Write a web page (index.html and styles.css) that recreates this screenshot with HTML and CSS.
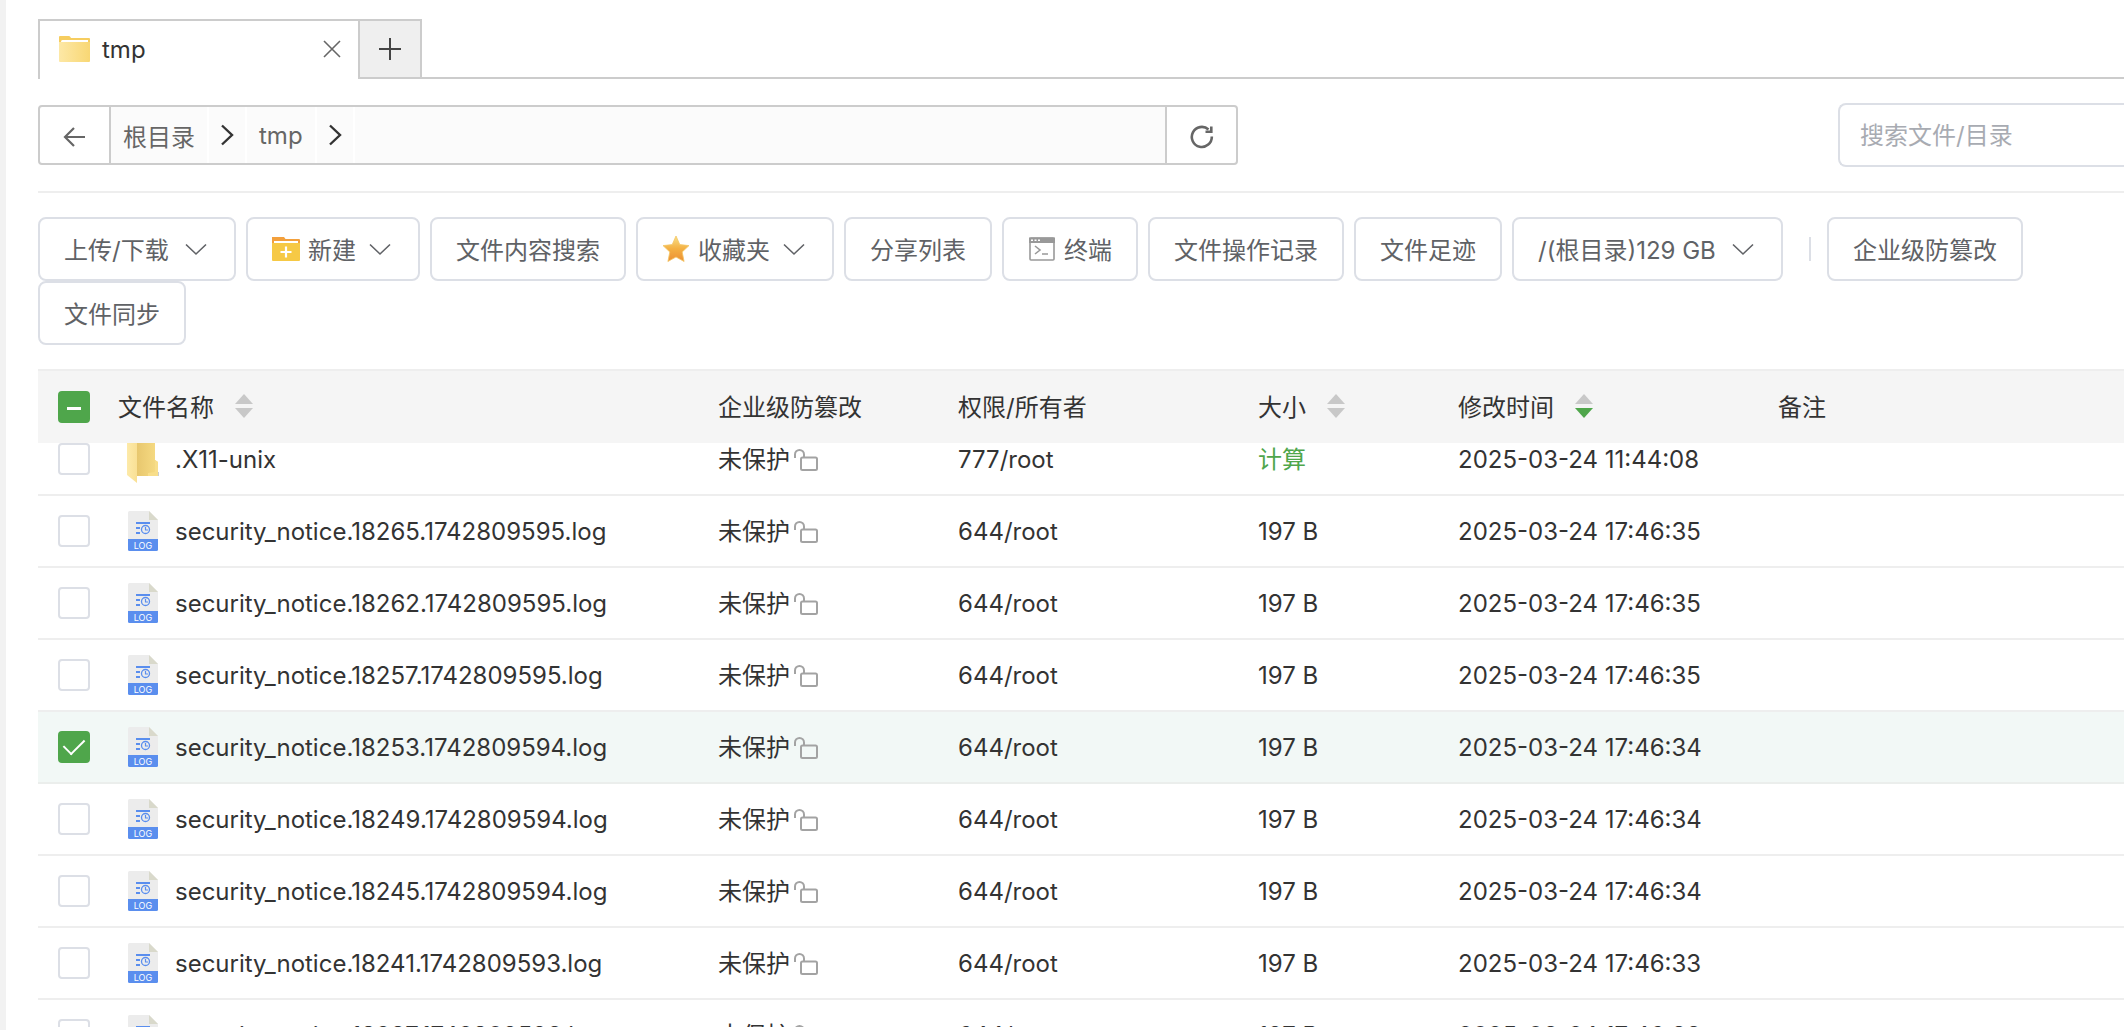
FILE: index.html
```html
<!DOCTYPE html>
<html lang="zh-CN">
<head>
    <meta charset="UTF-8">
    <meta name="viewport" content="width=device-width, initial-scale=1.0">
    <title>文件管理 - tmp</title>
    <link rel="stylesheet" href="styles.css">
</head>
<body>
    <!-- 图标 -->
    <svg class="icon-defs" aria-hidden="true">
        <defs>
            <linearGradient id="tabFolderFill" x1="0" x2="1" y1="0" y2="0">
                <stop offset="0" stop-color="#fde8a6"/>
                <stop offset="1" stop-color="#f8d774"/>
            </linearGradient>
            <linearGradient id="starFill" x1="0" x2="0" y1="0" y2="1">
                <stop offset="0" stop-color="#f8e08a"/>
                <stop offset="0.5" stop-color="#f4b043"/>
                <stop offset="1" stop-color="#ec8f35"/>
            </linearGradient>
            <linearGradient id="folderBack" x1="0" x2="1" y1="0" y2="0">
                <stop offset="0" stop-color="#e6c56c"/>
                <stop offset="1" stop-color="#f7dc84"/>
            </linearGradient>
            <linearGradient id="folderFlap" x1="0" x2="1" y1="0" y2="0">
                <stop offset="0" stop-color="#fdeaa9"/>
                <stop offset="1" stop-color="#f9e095"/>
            </linearGradient>
            <symbol id="icon-down" viewBox="0 0 28 28">
                <path d="M4 9.500l10 9.500 10-9.500" fill="none" stroke="#606266" stroke-width="1.600"/>
            </symbol>
            <symbol id="icon-chevron" viewBox="0 0 20 24">
                <path d="M5 2.500l10 9.500L5 21.500" fill="none" stroke="#333" stroke-width="2.400"/>
            </symbol>
            <symbol id="icon-log" viewBox="0 0 30 40">
                <path d="M0 1.500Q0 0 1.500 0H21l9 9v20H0z" fill="#ececec"/>
                <path d="M21 0l9 9h-9z" fill="#d9d9cb"/>
                <path d="M0 28h30v10.500q0 1.500-1.500 1.500h-27Q0 40 0 38.500z" fill="#5a8eee"/>
                <path d="M8 12h14M8 17h4M8 22h4" stroke="#5a8eee" stroke-width="2" fill="none"/>
                <circle cx="17.500" cy="18.500" r="4" fill="none" stroke="#5a8eee" stroke-width="1.300"/>
                <path d="M17.500 16v3h2.500" fill="none" stroke="#5a8eee" stroke-width="1.200"/>
                <text x="15" y="37.500" text-anchor="middle" font-size="9" fill="#fff">LOG</text>
            </symbol>
            <symbol id="icon-folder" viewBox="0 0 32 48">
                <path d="M8 2h20v23l3 2v14H8z" fill="url(#folderBack)"/>
                <path d="M28 25l3 2v14H21v-3l7-1z" fill="#f8de8a"/>
                <path d="M0 2l10 6v40L0 40z" fill="url(#folderFlap)"/>
                <path d="M31 37h1v4h-1z" fill="#c9cdd0"/>
            </symbol>
            <symbol id="icon-unlock" viewBox="0 0 26 24">
                <path d="M2 10V6.500a4.500 4.500 0 0 1 9 0V9" fill="none" stroke="#a3a3a3" stroke-width="2"/>
                <rect x="8" y="9.500" width="16" height="12.500" rx="1.500" fill="none" stroke="#a3a3a3" stroke-width="2"/>
            </symbol>
            <symbol id="icon-sort" viewBox="0 0 18 24">
                <path class="sort-up" d="M9 0l9 10H0z"/>
                <path class="sort-down" d="M0 14h18L9 24z"/>
            </symbol>
        </defs>
    </svg>

    <div class="file-page">
        <!-- 标签页 -->
        <div class="file-tabs">
            <div class="file-tab">
                <svg class="tab-folder" viewBox="0 0 32 28">
                    <path d="M1 2Q1 1 2 1h9q1 0 2 2h18q1 0 1 1v10H1z" fill="#f6cd5f"/>
                    <path d="M3 6.500Q3 5 4.500 5H30v4H3z" fill="#fff"/>
                    <path d="M1 7h31v19q0 1-1 1H2q-1 0-1-1z" fill="url(#tabFolderFill)"/>
                </svg>
                <span class="tab-title">tmp</span>
                <button type="button" class="tab-close" aria-label="关闭">
                    <svg viewBox="0 0 20 20"><path d="M2 2l16 16M18 2L2 18" stroke="#666" stroke-width="1.600"/></svg>
                </button>
            </div>
            <button type="button" class="tab-add" aria-label="新增标签">
                <svg viewBox="0 0 24 24"><path d="M12 1v22M1 12h22" stroke="#444" stroke-width="2"/></svg>
            </button>
        </div>

        <!-- 路径和搜索 -->
        <div class="nav-row">
            <div class="path-bar">
                <button type="button" class="path-btn path-back" aria-label="返回">
                    <svg viewBox="0 0 24 24"><path d="M22 12H2M11 3l-9 9 9 9" fill="none" stroke="#666" stroke-width="2.200"/></svg>
                </button>
                <div class="path-list">
                    <a href="#" class="path-item">根目录</a>
                    <span class="path-arrow"><svg><use href="#icon-chevron"/></svg></span>
                    <a href="#" class="path-item">tmp</a>
                    <span class="path-arrow"><svg><use href="#icon-chevron"/></svg></span>
                    <span class="path-rest"></span>
                </div>
                <button type="button" class="path-btn path-refresh" aria-label="刷新">
                    <svg viewBox="0 0 24 24">
                        <path d="M21.800 11.500A10 10 0 1 1 18.500 4.500" fill="none" stroke="#666" stroke-width="2.600"/>
                        <path d="M21.300 1.500V6.800H15.500" fill="none" stroke="#666" stroke-width="2.600"/>
                    </svg>
                </button>
            </div>
            <input type="text" class="search-input" placeholder="搜索文件/目录" aria-label="搜索文件/目录">
        </div>

        <!-- 工具栏 -->
        <div class="toolbar">
            <button type="button" class="btn btn-wide">上传/下载<svg class="btn-down"><use href="#icon-down"/></svg></button>
            <button type="button" class="btn">
                <svg class="btn-icon" viewBox="0 0 28 28">
                    <path d="M0 2h12l1.500 2H27q1 0 1 1v6H0z" fill="#f3a03c"/>
                    <path d="M2 6h24v3H2z" fill="#fff"/>
                    <path d="M0 8h28v17q0 1-1 1H1q-1 0-1-1z" fill="#f6c945"/>
                    <path d="M14 11.500v11M8.500 17h11" stroke="#fff" stroke-width="2.200"/>
                </svg>
                新建<svg class="btn-down"><use href="#icon-down"/></svg>
            </button>
            <button type="button" class="btn">文件内容搜索</button>
            <button type="button" class="btn btn-wide">
                <svg class="btn-icon" viewBox="0 0 28 28">
                    <path d="M14 1l3.800 8.600 9.200 1-6.800 6.400 1.900 9.500L14 22l-8.100 4.500L7.800 17 1 10.600l9.200-1z" fill="url(#starFill)" stroke="#f4c766" stroke-width="0.800" stroke-linejoin="round"/>
                </svg>
                收藏夹<svg class="btn-down"><use href="#icon-down"/></svg>
            </button>
            <button type="button" class="btn">分享列表</button>
            <button type="button" class="btn">
                <svg class="btn-icon" viewBox="0 0 28 28">
                    <rect x="2" y="3" width="24" height="22" rx="1" fill="#fff" stroke="#999" stroke-width="1.600"/>
                    <path d="M1 2.500h26V8H1z" fill="#999"/>
                    <path d="M3 5.200h2M6.500 5.200h2M10 5.200h2" stroke="#fff" stroke-width="1.600"/>
                    <path d="M7 11l5 4-5 4M14 19h6" fill="none" stroke="#999" stroke-width="1.600"/>
                </svg>
                终端
            </button>
            <button type="button" class="btn">文件操作记录</button>
            <button type="button" class="btn">文件足迹</button>
            <button type="button" class="btn btn-disk">/(根目录)129 GB<svg class="btn-down"><use href="#icon-down"/></svg></button>
            <span class="toolbar-line"></span>
            <button type="button" class="btn">企业级防篡改</button>
            <button type="button" class="btn">文件同步</button>
        </div>

        <!-- 文件列表 -->
        <div class="file-list">
            <table class="file-table file-head">
                <colgroup>
                    <col class="col-check"><col class="col-name"><col class="col-protect"><col class="col-auth"><col class="col-size"><col class="col-time"><col>
                </colgroup>
                <thead>
                    <tr>
                        <th><input type="checkbox" class="checkbox is-half" aria-label="全选"></th>
                        <th>文件名称<svg class="sort"><use href="#icon-sort"/></svg></th>
                        <th>企业级防篡改</th>
                        <th>权限/所有者</th>
                        <th>大小<svg class="sort"><use href="#icon-sort"/></svg></th>
                        <th>修改时间<svg class="sort sort-desc"><use href="#icon-sort"/></svg></th>
                        <th>备注</th>
                    </tr>
                </thead>
            </table>
            <div class="file-body">
                <table class="file-table">
                    <colgroup>
                        <col class="col-check"><col class="col-name"><col class="col-protect"><col class="col-auth"><col class="col-size"><col class="col-time"><col>
                    </colgroup>
                    <tbody>
                        <tr>
                            <td><input type="checkbox" class="checkbox" aria-label=".X11-unix"></td>
                            <td><div class="file-name"><svg class="icon-folder"><use href="#icon-folder"/></svg>.X11-unix</div></td>
                            <td>未保护<svg class="unlock"><use href="#icon-unlock"/></svg></td>
                            <td>777/root</td>
                            <td><a href="#" class="link">计算</a></td>
                            <td>2025-03-24 11:44:08</td>
                            <td></td>
                        </tr>
                        <tr>
                            <td><input type="checkbox" class="checkbox" aria-label="security_notice.18265.1742809595.log"></td>
                            <td><div class="file-name"><svg class="icon-log"><use href="#icon-log"/></svg>security_notice.18265.1742809595.log</div></td>
                            <td>未保护<svg class="unlock"><use href="#icon-unlock"/></svg></td>
                            <td>644/root</td>
                            <td>197 B</td>
                            <td>2025-03-24 17:46:35</td>
                            <td></td>
                        </tr>
                        <tr>
                            <td><input type="checkbox" class="checkbox" aria-label="security_notice.18262.1742809595.log"></td>
                            <td><div class="file-name"><svg class="icon-log"><use href="#icon-log"/></svg>security_notice.18262.1742809595.log</div></td>
                            <td>未保护<svg class="unlock"><use href="#icon-unlock"/></svg></td>
                            <td>644/root</td>
                            <td>197 B</td>
                            <td>2025-03-24 17:46:35</td>
                            <td></td>
                        </tr>
                        <tr>
                            <td><input type="checkbox" class="checkbox" aria-label="security_notice.18257.1742809595.log"></td>
                            <td><div class="file-name"><svg class="icon-log"><use href="#icon-log"/></svg>security_notice.18257.1742809595.log</div></td>
                            <td>未保护<svg class="unlock"><use href="#icon-unlock"/></svg></td>
                            <td>644/root</td>
                            <td>197 B</td>
                            <td>2025-03-24 17:46:35</td>
                            <td></td>
                        </tr>
                        <tr class="selected">
                            <td><input type="checkbox" class="checkbox" aria-label="security_notice.18253.1742809594.log" checked></td>
                            <td><div class="file-name"><svg class="icon-log"><use href="#icon-log"/></svg>security_notice.18253.1742809594.log</div></td>
                            <td>未保护<svg class="unlock"><use href="#icon-unlock"/></svg></td>
                            <td>644/root</td>
                            <td>197 B</td>
                            <td>2025-03-24 17:46:34</td>
                            <td></td>
                        </tr>
                        <tr>
                            <td><input type="checkbox" class="checkbox" aria-label="security_notice.18249.1742809594.log"></td>
                            <td><div class="file-name"><svg class="icon-log"><use href="#icon-log"/></svg>security_notice.18249.1742809594.log</div></td>
                            <td>未保护<svg class="unlock"><use href="#icon-unlock"/></svg></td>
                            <td>644/root</td>
                            <td>197 B</td>
                            <td>2025-03-24 17:46:34</td>
                            <td></td>
                        </tr>
                        <tr>
                            <td><input type="checkbox" class="checkbox" aria-label="security_notice.18245.1742809594.log"></td>
                            <td><div class="file-name"><svg class="icon-log"><use href="#icon-log"/></svg>security_notice.18245.1742809594.log</div></td>
                            <td>未保护<svg class="unlock"><use href="#icon-unlock"/></svg></td>
                            <td>644/root</td>
                            <td>197 B</td>
                            <td>2025-03-24 17:46:34</td>
                            <td></td>
                        </tr>
                        <tr>
                            <td><input type="checkbox" class="checkbox" aria-label="security_notice.18241.1742809593.log"></td>
                            <td><div class="file-name"><svg class="icon-log"><use href="#icon-log"/></svg>security_notice.18241.1742809593.log</div></td>
                            <td>未保护<svg class="unlock"><use href="#icon-unlock"/></svg></td>
                            <td>644/root</td>
                            <td>197 B</td>
                            <td>2025-03-24 17:46:33</td>
                            <td></td>
                        </tr>
                        <tr>
                            <td><input type="checkbox" class="checkbox" aria-label="security_notice.18237.1742809593.log"></td>
                            <td><div class="file-name"><svg class="icon-log"><use href="#icon-log"/></svg>security_notice.18237.1742809593.log</div></td>
                            <td>未保护<svg class="unlock"><use href="#icon-unlock"/></svg></td>
                            <td>644/root</td>
                            <td>197 B</td>
                            <td>2025-03-24 17:46:33</td>
                            <td></td>
                        </tr>
                    </tbody>
                </table>
            </div>
        </div>
    </div>
</body>
</html>
```
FILE: styles.css
```css
* {
    box-sizing: border-box;
}

body {
    margin: 0;
    font-family: Inter, "Noto Sans CJK SC", sans-serif;
    font-size: 24px;
    color: #333;
    background-color: #fff;
}

button, input {
    font-family: inherit;
    font-size: inherit;
    margin: 0;
}

a {
    text-decoration: none;
}

svg {
    display: block;
    flex: none;
}

.icon-defs {
    position: absolute;
    width: 0;
    height: 0;
}

.file-page {
    display: flex;
    flex-direction: column;
    height: 100vh;
    padding: 19px 0 3px 32px;
    border-left: 6px solid #f2f2f2;
    overflow: hidden;
}

/* 标签页 */
.file-tabs {
    display: flex;
    flex: none;
    height: 60px;
}

.file-tabs::after {
    content: "";
    flex: 1;
    border-bottom: 2px solid #ccc;
}

.file-tab {
    display: flex;
    align-items: center;
    width: 320px;
    padding: 0 16px 2px 18px;
    border: 2px solid #ccc;
    border-right: 0;
    border-bottom: 0;
}

.tab-folder {
    width: 32px;
    height: 28px;
    margin-right: 12px;
}

.tab-title {
    flex: 1;
}

.tab-close {
    padding: 0;
    border: 0;
    background: none;
    cursor: pointer;
}

.tab-close svg {
    width: 20px;
    height: 20px;
}

.tab-add {
    display: flex;
    align-items: center;
    justify-content: center;
    width: 64px;
    padding: 0;
    border: 2px solid #ccc;
    background-color: #efefef;
    cursor: pointer;
}

.tab-add svg {
    width: 24px;
    height: 24px;
}

/* 路径和搜索 */
.nav-row {
    display: flex;
    flex: none;
    align-items: center;
    justify-content: space-between;
    padding: 24px 0;
    border-bottom: 2px solid #eee;
}

.path-bar {
    display: flex;
    flex: 0 1 1200px;
    height: 60px;
    border: 2px solid #ccc;
    border-radius: 4px;
}

.path-btn {
    display: flex;
    align-items: center;
    justify-content: center;
    width: 71px;
    padding: 4px 0 0;
    border: 0;
    background: none;
    cursor: pointer;
}

.path-back {
    border-right: 2px solid #ccc;
}

.path-refresh {
    border-left: 2px solid #ccc;
}

.path-btn svg {
    width: 24px;
    height: 24px;
}

.path-list {
    display: flex;
    flex: 1;
    gap: 2px;
}

.path-item, .path-arrow, .path-rest {
    display: flex;
    align-items: center;
    background-color: #fbfbfb;
    color: #666;
}

.path-item {
    padding: 0 12px;
}

.path-arrow {
    justify-content: center;
    width: 36px;
}

.path-arrow svg {
    width: 20px;
    height: 24px;
}

.path-rest {
    flex: 1;
}

.search-input {
    width: 286px;
    height: 64px;
    padding: 0 20px;
    border: 2px solid #dcdfe6;
    border-right: 0;
    border-radius: 8px 0 0 8px;
    color: #606266;
    outline: none;
}

.search-input::placeholder {
    color: #a8abb2;
}

/* 工具栏 */
.toolbar {
    display: flex;
    flex: none;
    flex-wrap: wrap;
    align-items: center;
    column-gap: 10px;
    padding: 24px 0;
}

.btn {
    display: flex;
    align-items: center;
    height: 64px;
    padding: 0 24px 2px;
    border: 2px solid #dcdfe6;
    border-radius: 8px;
    background-color: #fff;
    color: #606266;
    white-space: nowrap;
    cursor: pointer;
}

.btn-wide {
    min-width: 198px;
}

.btn-disk {
    min-width: 271px;
}

.btn-icon {
    width: 28px;
    height: 28px;
    margin: 2px 8px 0 0;
}

.btn-down {
    width: 28px;
    height: 28px;
    margin: 2px 0 0 10px;
}

.btn-wide .btn-down, .btn-disk .btn-down {
    margin-left: auto;
}

.toolbar-line {
    width: 2px;
    height: 24px;
    margin: 0 6px 0 16px;
    background-color: #dcdfe6;
}

/* 文件列表 */
.file-list {
    display: flex;
    flex: 1;
    flex-direction: column;
    min-height: 0;
    border-top: 2px solid #eee;
}

.file-table {
    width: 100%;
    table-layout: fixed;
    border-collapse: separate;
    border-spacing: 0;
}

.col-check {
    width: 60px;
}

.col-name {
    width: 600px;
}

.col-protect {
    width: 240px;
}

.col-auth {
    width: 300px;
}

.col-size {
    width: 200px;
}

.col-time {
    width: 320px;
}

.file-table th, .file-table td {
    height: 72px;
    padding: 2px 0 0 20px;
    text-align: left;
    font-weight: normal;
    line-height: 32px;
    white-space: nowrap;
}

.file-table th:first-child, .file-table td:first-child {
    padding-top: 0;
}

.file-table th {
    background-color: #f5f5f5;
}

.file-table td {
    border-bottom: 2px solid #eee;
}

.file-body {
    flex: 1;
    min-height: 0;
    overflow: hidden;
}

/* 列表滚动后的位置 */
.file-body .file-table {
    margin-top: -19px;
}

.file-table .selected td {
    background-color: #f2f8f6;
    border-bottom-color: #ebeeec;
}

.file-name {
    display: flex;
    align-items: center;
    padding-left: 9px;
}

.icon-folder {
    width: 32px;
    height: 48px;
    margin: 0 16px 2px 0;
}

.icon-log {
    width: 30px;
    height: 40px;
    margin: 0 17px 2px 1px;
}

.unlock {
    display: inline-block;
    width: 26px;
    height: 24px;
    margin-left: 3px;
    vertical-align: -4px;
}

.sort {
    display: inline-block;
    width: 18px;
    height: 24px;
    margin-left: 21px;
    vertical-align: -2px;
    fill: #c8c8c8;
}

.sort-down {
    fill: var(--sort-down, #c8c8c8);
}

.sort-desc {
    --sort-down: #4fa64b;
}

.link {
    color: #4fa64b;
}

/* 复选框 */
.checkbox {
    display: flex;
    align-items: center;
    justify-content: center;
    width: 32px;
    height: 32px;
    border: 2px solid #dcdfe6;
    border-radius: 4px;
    background-color: #fff;
    appearance: none;
    cursor: pointer;
}

.checkbox:checked, .checkbox.is-half {
    border-color: #4fa64b;
    background-color: #4fa64b;
}

.checkbox:checked::after {
    content: "";
    width: 10px;
    height: 18px;
    margin-bottom: 6px;
    border: solid #fff;
    border-width: 0 2px 2px 0;
    transform: rotate(45deg);
}

.checkbox.is-half::after {
    content: "";
    width: 14px;
    height: 3px;
    margin-top: 2px;
    background-color: #fff;
}
```
